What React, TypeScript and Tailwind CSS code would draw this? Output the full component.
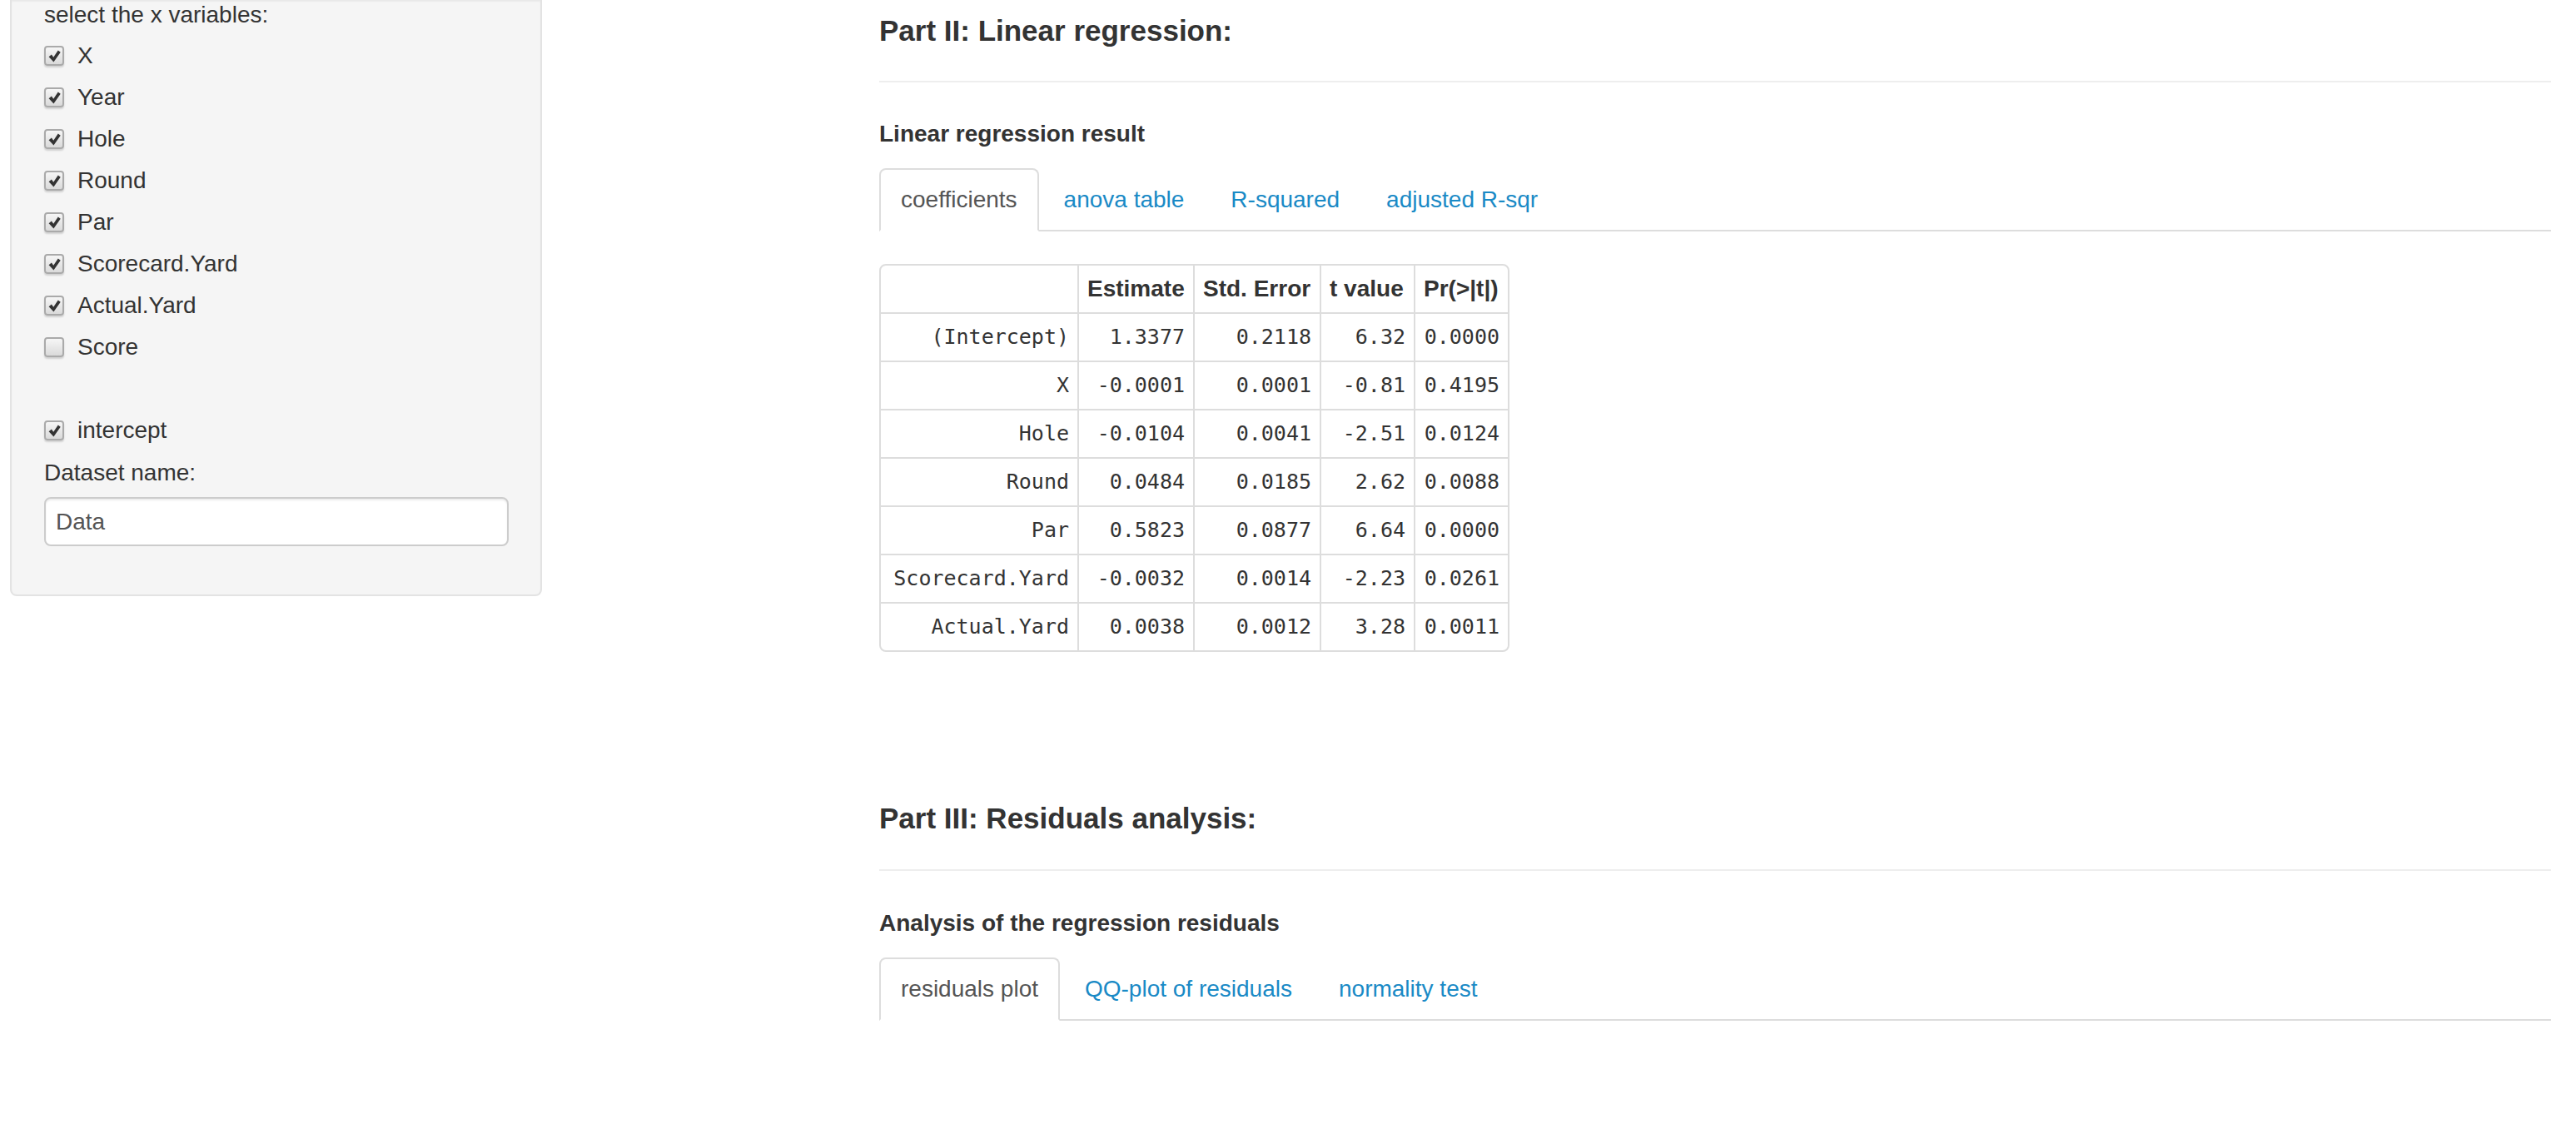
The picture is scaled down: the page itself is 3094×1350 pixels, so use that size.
import React from 'react';

const xVars = [
  { name: 'X', on: true },
  { name: 'Year', on: true },
  { name: 'Hole', on: true },
  { name: 'Round', on: true },
  { name: 'Par', on: true },
  { name: 'Scorecard.Yard', on: true },
  { name: 'Actual.Yard', on: true },
  { name: 'Score', on: false },
];

const coefs = [
  ['(Intercept)', '1.3377', '0.2118', '6.32', '0.0000'],
  ['X', '-0.0001', '0.0001', '-0.81', '0.4195'],
  ['Hole', '-0.0104', '0.0041', '-2.51', '0.0124'],
  ['Round', '0.0484', '0.0185', '2.62', '0.0088'],
  ['Par', '0.5823', '0.0877', '6.64', '0.0000'],
  ['Scorecard.Yard', '-0.0032', '0.0014', '-2.23', '0.0261'],
  ['Actual.Yard', '0.0038', '0.0012', '3.28', '0.0011'],
];

const headers = ['', 'Estimate', 'Std. Error', 't value', 'Pr(>|t|)'];
const colWidths = ['w-[238px]', 'w-[139px]', 'w-[152px]', 'w-[113px]', 'w-[111px]'];

function CheckBox({ checked }: { checked: boolean }) {
  return (
    <span className="flex h-[24px] w-[24px] shrink-0 items-center justify-center rounded-[4px] border-2 border-[#aaaaaa] bg-linear-to-b from-[#f6f6f6] to-[#dadada] shadow-[0_2px_2px_rgba(0,0,0,0.15)]">
      {checked && (
        <svg viewBox="0 0 16 16" className="h-[17px] w-[17px]">
          <path d="M1.5 8.8 L4.6 6.2 L6.8 9.2 L12 1.5 L14.8 3.6 L7 14.6 Z" fill="#333" />
        </svg>
      )}
    </span>
  );
}

function Tabs({ items, active }: { items: string[]; active: number }) {
  return (
    <nav className="flex gap-[4px] border-b-2 border-[#dddddd]">
      {items.map((t, i) => (
        <span
          key={t}
          className={
            i === active
              ? '-mb-[2px] rounded-t-[8px] border-2 border-[#dddddd] border-b-white bg-white px-[24px] py-[16px] leading-[40px] text-[#555555]'
              : '-mb-[2px] rounded-t-[8px] border-2 border-transparent px-[24px] py-[16px] leading-[40px] text-[#1a8ac6]'
          }
        >
          {t}
        </span>
      ))}
    </nav>
  );
}

function CoefTable() {
  return (
    <div className="mt-[39px] inline-block overflow-hidden rounded-[8px] border-2 border-[#dddddd]">
      <table className="table-fixed border-separate border-spacing-0">
        <thead>
          <tr>
            {headers.map((h, i) => (
              <th
                key={i}
                className={`${colWidths[i]} border-b-2 border-[#dddddd] px-[10px] py-[10px] text-left font-bold leading-[36px] ${i < 4 ? 'border-r-2' : ''}`}
              >
                {h}
              </th>
            ))}
          </tr>
        </thead>
        <tbody className="font-['DejaVu_Sans_Mono',monospace] text-[25px]">
          {coefs.map((row, r) => (
            <tr key={row[0]}>
              {row.map((c, i) => (
                <td
                  key={i}
                  className={`border-[#dddddd] px-[10px] py-[10px] text-right leading-[36px] ${i < 4 ? 'border-r-2' : ''} ${r < coefs.length - 1 ? 'border-b-2' : ''}`}
                >
                  {c}
                </td>
              ))}
            </tr>
          ))}
        </tbody>
      </table>
    </div>
  );
}

export default function App() {
  return (
    <div className="flex min-h-[1350px] w-[3094px] items-start bg-white font-['Liberation_Sans',Arial,sans-serif] text-[28px] text-[#333333]">
      {/* sidebar panel, scrolled so its top edge is out of view */}
      <aside className="ml-[12px] w-[639px] shrink-0 rounded-b-[8px] border-2 border-t-0 border-[#e3e3e3] bg-[#f5f5f5] pb-[58px] pl-[39px] pr-[38px] shadow-[inset_0_2px_2px_rgba(0,0,0,0.05)]">
        <div className="leading-[36px]">select the x variables:</div>
        <div className="mt-[11px] flex flex-col gap-[10px]">
          {xVars.map((v) => (
            <label key={v.name} className="flex h-[40px] items-center gap-[16px]">
              <CheckBox checked={v.on} />
              <span>{v.name}</span>
            </label>
          ))}
        </div>
        <label className="mt-[60px] flex h-[40px] items-center gap-[16px]">
          <CheckBox checked />
          <span>intercept</span>
        </label>
        <div className="mt-[11px] leading-[40px]">Dataset name:</div>
        <div className="mt-[9px] flex h-[59px] items-center rounded-[8px] border-2 border-[#cccccc] bg-white px-[12px] text-[#555555] shadow-[inset_0_2px_2px_rgba(0,0,0,0.075)]">
          Data
        </div>
      </aside>

      <main className="ml-[405px] w-[2008px]">
        <h3 className="mt-[13px] text-[35px] font-bold leading-[48px]">Part II: Linear regression:</h3>
        <hr className="mt-[36px] border-t-2 border-[#eeeeee]" />
        <div className="mt-[42px] font-bold leading-[40px]">Linear regression result</div>
        <div className="mt-[21px]">
          <Tabs items={['coefficients', 'anova table', 'R-squared', 'adjusted R-sqr']} active={0} />
        </div>
        <CoefTable />

        <h3 className="mt-[164px] text-[35px] font-bold leading-[48px]">Part III: Residuals analysis:</h3>
        <hr className="mt-[37px] border-t-2 border-[#eeeeee]" />
        <div className="mt-[43px] font-bold leading-[40px]">Analysis of the regression residuals</div>
        <div className="mt-[21px]">
          <Tabs items={['residuals plot', 'QQ-plot of residuals', 'normality test']} active={0} />
        </div>
      </main>
    </div>
  );
}
